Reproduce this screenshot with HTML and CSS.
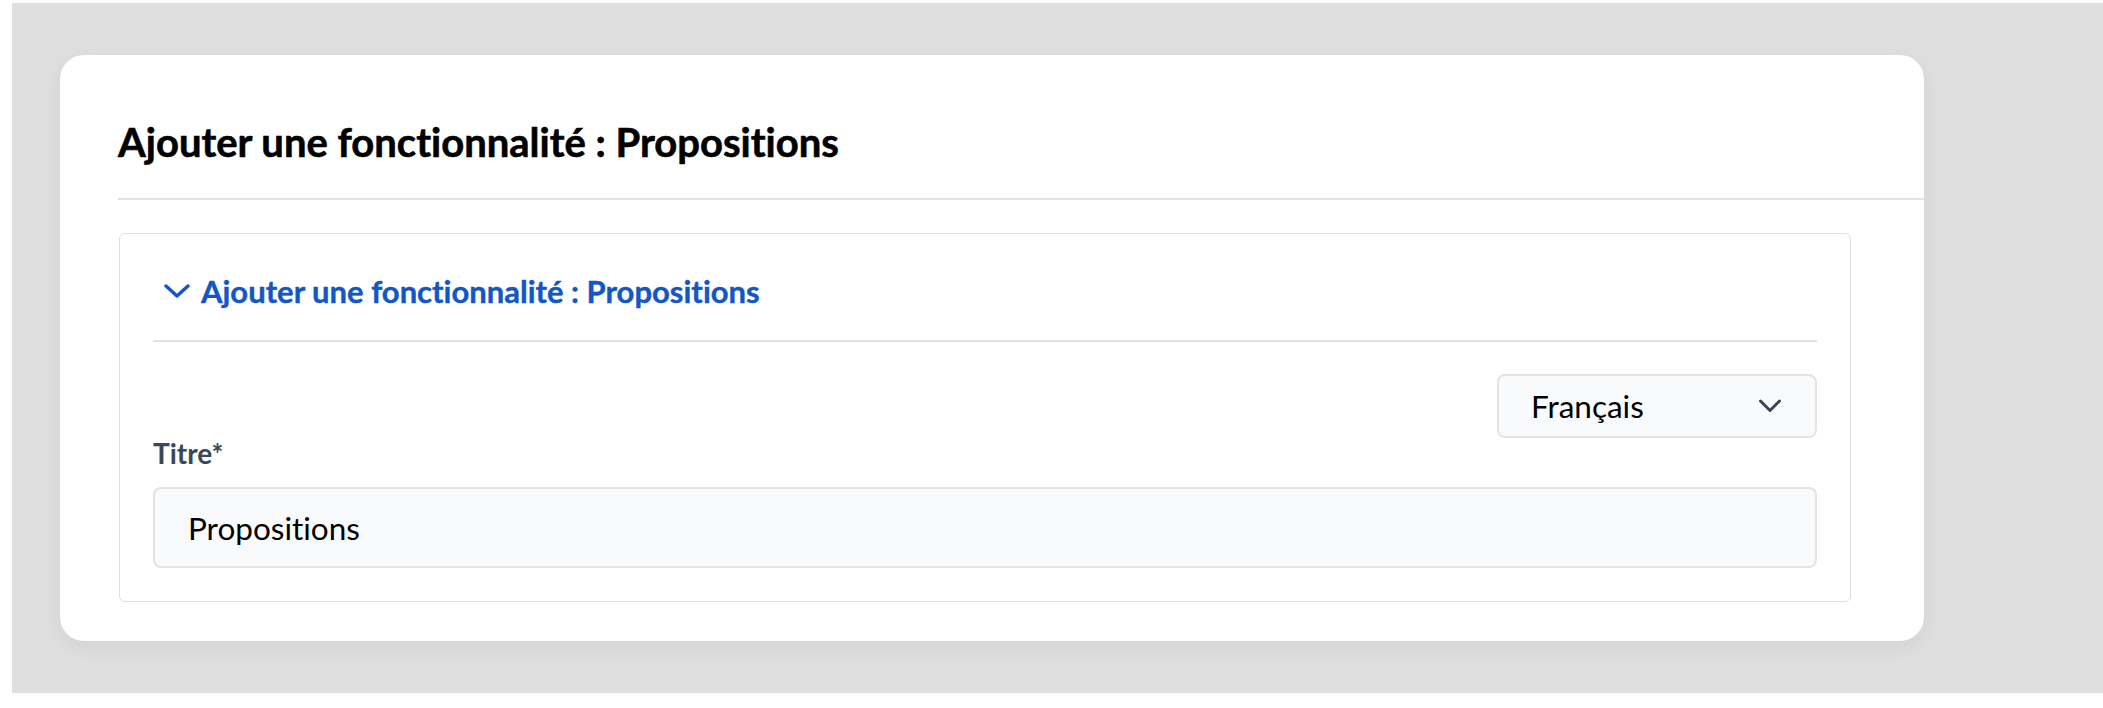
FILE: index.html
```html
<!DOCTYPE html>
<html lang="fr">
<head>
<meta charset="utf-8">
<title>Ajouter une fonctionnalité : Propositions</title>
<link rel="stylesheet" href="styles.css">
</head>
<body>
<div class="page">
  <div class="card">
    <div class="card-header">
      <h1 class="card-title">Ajouter une fonctionnalité : Propositions</h1>
    </div>
    <div class="panel">
      <div class="panel-header">
        <svg class="acc-chevron" width="26" height="14" viewBox="0 0 26 14" aria-hidden="true">
          <path d="M2 2 L13 12 L24 2" fill="none" stroke="currentColor" stroke-width="3.4" stroke-linecap="round" stroke-linejoin="round"/>
        </svg>
        <span class="panel-title">Ajouter une fonctionnalité : Propositions</span>
      </div>
      <div class="lang-row">
        <div class="select">
          <span class="select-value">Français</span>
          <svg class="select-chevron" width="24" height="14" viewBox="0 0 24 14" aria-hidden="true">
            <path d="M2.5 2 L12 11.5 L21.5 2" fill="none" stroke="currentColor" stroke-width="3" stroke-linecap="round" stroke-linejoin="round"/>
          </svg>
        </div>
      </div>
      <label class="field-label">Titre*</label>
      <div class="input">Propositions</div>
    </div>
  </div>
</div>
</body>
</html>
```
FILE: styles.css
```css
html, body {
  margin: 0;
  padding: 0;
  background: #ffffff;
}
body {
  font-family: "Lato", "Noto Sans", sans-serif;
  font-variant-ligatures: none;
  font-feature-settings: "liga" 0, "clig" 0;
  color: #000;
}
.page {
  margin: 3px 0 0 12px;
  height: 690px;
  box-sizing: border-box;
  background: #dfdfdf;
  padding: 52px 0 0 48px;
}
.card {
  width: 1864px;
  height: 586px;
  box-sizing: border-box;
  background: #ffffff;
  border-radius: 24px;
  box-shadow: 0 6px 22px rgba(0, 0, 0, 0.06);
  display: flex;
  flex-direction: column;
}
.card-header {
  margin-left: 58px;
  height: 145px;
  box-sizing: border-box;
  padding-top: 30px;
  border-bottom: 2px solid #e3e3e3;
  display: flex;
  align-items: center;
}
.card-title {
  margin: 0;
  font-size: 40px;
  font-weight: 700;
  line-height: 1.2;
  color: #000;
  -webkit-text-stroke: 0.6px #000;
}
.panel {
  margin: 33px 0 0 59px;
  width: 1732px;
  box-sizing: border-box;
  border: 1px solid #dedede;
  border-radius: 6px;
  padding: 0 33px 33px 33px;
  display: flex;
  flex-direction: column;
}
.panel-header {
  height: 108px;
  box-sizing: border-box;
  padding-top: 8px;
  border-bottom: 2px solid #e3e3e3;
  display: flex;
  align-items: center;
  gap: 11px;
  color: #1356c6;
}
.acc-chevron {
  margin-left: 11px;
}
.panel-title {
  font-size: 31px;
  font-weight: 700;
  -webkit-text-stroke: 0.4px #1356c6;
}
.lang-row {
  margin-top: 32px;
  display: flex;
  justify-content: flex-end;
}
.select {
  width: 320px;
  height: 64px;
  box-sizing: border-box;
  border: 2px solid #e4e4e6;
  border-radius: 8px;
  background: #f9fafb;
  display: flex;
  align-items: center;
  justify-content: space-between;
  padding: 0 33px 0 32px;
  color: #3a4556;
}
.select-value {
  font-size: 31.5px;
  color: #000;
}
.field-label {
  display: block;
  height: 30px;
  line-height: 30px;
  font-size: 28px;
  font-weight: 700;
  color: #3c4758;
}
.input {
  margin-top: 19px;
  height: 81px;
  box-sizing: border-box;
  border: 2px solid #e4e4e6;
  border-radius: 8px;
  background: #f9fafb;
  display: flex;
  align-items: center;
  padding-left: 33px;
  font-size: 31.5px;
  color: #000;
}
```
